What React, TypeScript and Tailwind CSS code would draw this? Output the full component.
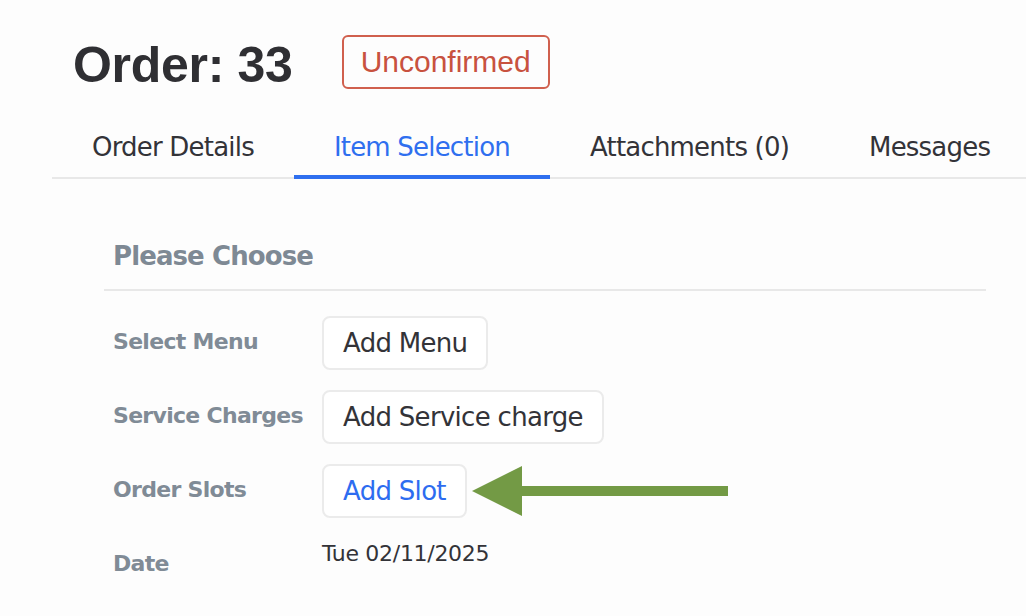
import React from 'react';

const tahoma = { fontFamily: '"DejaVu Sans", Verdana, sans-serif' };

const tabs = ['Order Details', 'Item Selection', 'Attachments (0)', 'Messages'];

interface RowProps {
  label: string;
  children: React.ReactNode;
}

const Row: React.FC<RowProps> = ({ label, children }) => (
  <div className="flex items-start">
    <div className="w-[209px] shrink-0 pt-[15px] text-[22px] leading-none font-bold tracking-[-0.7px] text-[#808b96] whitespace-nowrap">
      {label}
    </div>
    {children}
  </div>
);

const ActionButton: React.FC<{ text: string; blue?: boolean }> = ({ text, blue }) => (
  <button
    type="button"
    className={`h-[54px] px-[19px] flex items-center rounded-[8px] border-2 border-[#ebebeb] bg-white text-[26px] leading-none tracking-[-0.7px] whitespace-nowrap ${
      blue ? 'text-[#2d6cf0]' : 'text-[#333338]'
    }`}
  >
    {text}
  </button>
);

export default function App() {
  return (
    <div className="w-[1026px] h-[616px] overflow-hidden bg-[#fdfdfd]" style={tahoma}>
      <div className="flex items-start gap-[49px] pl-[73px] pt-[35px]">
        <h1
          className="mt-[5px] text-[50px] leading-none font-bold tracking-[-0.3px] text-[#2f2f33]"
          style={{ fontFamily: '"Liberation Sans", Arial, sans-serif' }}
        >
          Order: 33
        </h1>
        <div
          className="h-[54px] px-[17px] flex items-center rounded-[6px] border-2 border-[#d0604e] text-[30px] leading-none text-[#c8523f]"
          style={{ fontFamily: '"Liberation Sans", Arial, sans-serif' }}
        >
          Unconfirmed
        </div>
      </div>

      <div className="ml-[52px] mt-[44px] flex border-b-2 border-[#e8e8e8]">
        {tabs.map((t, i) => (
          <div
            key={t}
            className={`shrink-0 whitespace-nowrap -mb-[2px] px-[40px] pb-[15px] border-b-4 text-[26px] leading-none tracking-[-0.8px] ${
              i === 1 ? 'border-[#2f6fef] text-[#2f6fef]' : 'border-transparent text-[#333338]'
            }`}
          >
            {t}
          </div>
        ))}
      </div>

      <div className="ml-[104px] w-[882px] mt-[64px]">
        <div className="pl-[9px] pb-[20px] border-b-2 border-[#e8e8e8] text-[26px] leading-none font-bold tracking-[-0.9px] text-[#7e8994]">
          Please Choose
        </div>

        <div className="mt-[25px] pl-[9px] flex flex-col gap-[20px]">
          <Row label="Select Menu">
            <ActionButton text="Add Menu" />
          </Row>
          <Row label="Service Charges">
            <ActionButton text="Add Service charge" />
          </Row>
          <Row label="Order Slots">
            <ActionButton text="Add Slot" blue />
            <svg width="256" height="50" viewBox="0 0 256 50" className="ml-[5px] self-center">
              <polygon points="0,25 50,0 50,50" fill="#739a45" />
              <rect x="49" y="20" width="207" height="10" fill="#739a45" />
            </svg>
          </Row>
          <Row label="Date">
            <div className="pt-[5px] text-[22px] leading-none tracking-[-0.3px] text-[#333338]">
              Tue 02/11/2025
            </div>
          </Row>
        </div>
      </div>
    </div>
  );
}
